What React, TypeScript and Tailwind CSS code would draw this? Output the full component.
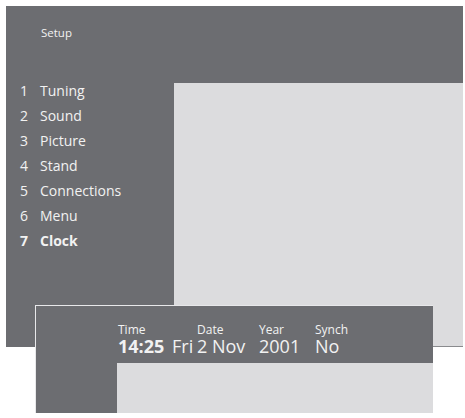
import React from "react";

const items = [
  ["1", "Tuning"],
  ["2", "Sound"],
  ["3", "Picture"],
  ["4", "Stand"],
  ["5", "Connections"],
  ["6", "Menu"],
  ["7", "Clock"],
];

export default function App() {
  return (
    <div
      className="relative w-[465px] h-[418px] bg-white overflow-hidden text-[#f2f2f2]"
      style={{ fontFamily: '"Open Sans", "Noto Sans", sans-serif' }}
    >
      <div className="absolute left-[6px] top-[6px] w-[457px] h-[341px] bg-[#6c6d71] flex flex-col">
        <div className="h-[72px] pl-[35px] pt-[19px] text-[11.5px] leading-[16px]">Setup</div>
        <div className="flex flex-1">
          <div className="w-[168px] pl-[14px]">
            {items.map(([n, l]) => (
              <div
                key={n}
                className={`flex h-[25px] text-[14px] leading-[25px] ${n === "7" ? "font-bold" : ""}`}
              >
                <span className="w-[20px]">{n}</span>
                <span>{l}</span>
              </div>
            ))}
          </div>
          <div className="flex-1 mt-[5px] bg-[#dcdcde] border-b border-[#8a8b8e]" />
        </div>
      </div>
      <div className="absolute left-[35px] top-[305px] w-[398px] h-[108px] border-t border-l border-[#e8e8ea] bg-[#6c6d71] flex flex-col">
        <div className="h-[57px] flex pl-[82px] pt-[17px]">
          <div className="w-[79px] flex flex-col">
            <span className="text-[12px] leading-[14px]">Time</span>
            <span className="flex text-[18px] leading-[18px] whitespace-nowrap">
              <span className="w-[54px] font-bold">14:25</span>
              <span>Fri</span>
            </span>
          </div>
          <div className="w-[62px] flex flex-col">
            <span className="text-[12px] leading-[14px]">Date</span>
            <span className="text-[18px] leading-[18px] whitespace-nowrap">2 Nov</span>
          </div>
          <div className="w-[56px] flex flex-col">
            <span className="text-[12px] leading-[14px]">Year</span>
            <span className="text-[18px] leading-[18px]">2001</span>
          </div>
          <div className="flex flex-col">
            <span className="text-[12px] leading-[14px]">Synch</span>
            <span className="text-[18px] leading-[18px]">No</span>
          </div>
        </div>
        <div className="flex flex-1">
          <div className="w-[81px]" />
          <div className="flex-1 bg-[#dcdcde]" />
        </div>
      </div>
    </div>
  );
}
